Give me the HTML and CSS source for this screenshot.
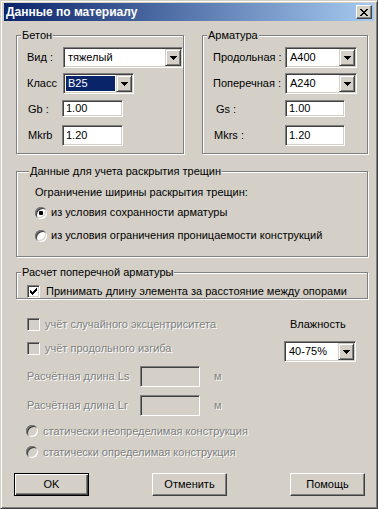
FILE: index.html
```html
<!DOCTYPE html>
<html lang="ru">
<head>
<meta charset="utf-8">
<title>Данные по материалу</title>
<link rel="stylesheet" href="styles.css">
</head>
<body>
<div class="window">
  <div class="titlebar">
    <span class="title">Данные по материалу</span>
    <span class="close"><svg width="8" height="7" viewBox="0 0 8 7"><path d="M0 0h2v1h-2zM6 0h2v1h-2zM1 1h2v1h-2zM5 1h2v1h-2zM2 2h4v1h-4zM3 3h2v1h-2zM2 4h4v1h-4zM1 5h2v1h-2zM5 5h2v1h-2zM0 6h2v1h-2zM6 6h2v1h-2z" fill="#000"/></svg></span>
  </div>
  <div class="content">
    <div class="top-row">
      <fieldset class="group beton">
        <legend>Бетон</legend>
        <div class="rows">
          <div class="row"><span class="lbl lbl-b">Вид :</span><div class="combo w120"><span class="val">тяжелый</span><span class="dd"><svg width="7" height="4" viewBox="0 0 7 4"><path d="M0 0h7v1h-1v1h-1v1h-1v1h-1v-1h-1v-1h-1v-1h-1z" fill="#000"/></svg></span></div></div>
          <div class="row"><span class="lbl lbl-b">Класс</span><div class="combo w71"><span class="val sel">В25</span><span class="dd"><svg width="7" height="4" viewBox="0 0 7 4"><path d="M0 0h7v1h-1v1h-1v1h-1v1h-1v-1h-1v-1h-1v-1h-1z" fill="#000"/></svg></span></div></div>
          <div class="row"><span class="lbl lbl-b p1">Gb :</span><div class="field short w61 ml-1">1.00</div></div>
          <div class="row"><span class="lbl lbl-b p1">Mkrb</span><div class="field w61 ml-1">1.20</div></div>
        </div>
      </fieldset>
      <fieldset class="group armatura">
        <legend>Арматура</legend>
        <div class="rows">
          <div class="row"><span class="lbl lbl-a">Продольная :</span><div class="combo w72"><span class="val">А400</span><span class="dd"><svg width="7" height="4" viewBox="0 0 7 4"><path d="M0 0h7v1h-1v1h-1v1h-1v1h-1v-1h-1v-1h-1v-1h-1z" fill="#000"/></svg></span></div></div>
          <div class="row"><span class="lbl lbl-a">Поперечная :</span><div class="combo w72"><span class="val">А240</span><span class="dd"><svg width="7" height="4" viewBox="0 0 7 4"><path d="M0 0h7v1h-1v1h-1v1h-1v1h-1v-1h-1v-1h-1v-1h-1z" fill="#000"/></svg></span></div></div>
          <div class="row"><span class="lbl lbl-a p3">Gs :</span><div class="field short w60">1.00</div></div>
          <div class="row"><span class="lbl lbl-a p1">Mkrs :</span><div class="field w60">1.20</div></div>
        </div>
      </fieldset>
    </div>

    <fieldset class="group cracks">
      <legend>Данные для учета раскрытия трещин</legend>
      <div class="note">Ограничение ширины раскрытия трещин:</div>
      <div class="rad-row first"><span class="radio checked"></span><span>из условия сохранности арматуры</span></div>
      <div class="rad-row second"><span class="radio"></span><span>из условия ограничения проницаемости конструкций</span></div>
    </fieldset>

    <fieldset class="group shear">
      <legend>Расчет поперечной арматуры</legend>
      <div class="crow wide"><span class="chk"><svg width="7" height="7" viewBox="0 0 7 7"><path d="M0 2h1v3h-1zM1 3h1v3h-1zM2 4h1v3h-1zM3 3h1v3h-1zM4 2h1v3h-1zM5 1h1v3h-1zM6 0h1v3h-1z" fill="#000"/></svg></span><span>Принимать длину элемента за расстояние между опорами</span></div>
    </fieldset>

    <div class="lower">
      <div class="lower-left disabled">
        <div class="crow c1"><span class="chk off"></span><span>учёт случайного эксцентриситета</span></div>
        <div class="crow c2"><span class="chk off"></span><span>учёт продольного изгиба</span></div>
        <div class="len-row r1"><span class="len-lbl">Расчётная длина Ls</span><div class="field off w60"></div><span class="unit">м</span></div>
        <div class="len-row r2"><span class="len-lbl">Расчётная длина Lr</span><div class="field off w60"></div><span class="unit">м</span></div>
        <div class="rad-row small s1"><span class="radio off"></span><span>статически неопределимая конструкция</span></div>
        <div class="rad-row small s2"><span class="radio off"></span><span>статически определимая конструкция</span></div>
      </div>
      <div class="lower-right">
        <div class="hum-lbl">Влажность</div>
        <div class="combo w72 hum"><span class="val">40-75%</span><span class="dd"><svg width="7" height="4" viewBox="0 0 7 4"><path d="M0 0h7v1h-1v1h-1v1h-1v1h-1v-1h-1v-1h-1v-1h-1z" fill="#000"/></svg></span></div>
      </div>
    </div>

    <div class="buttons">
      <div class="btn default">OK</div>
      <div class="btn">Отменить</div>
      <div class="btn">Помощь</div>
    </div>
  </div>
</div>
</body>
</html>
```

FILE: styles.css
```css
* { box-sizing: border-box; }
html, body { margin: 0; padding: 0; }
body {
  background: #d4d0c8;
  font-family: "Liberation Sans", Arial, sans-serif;
  font-size: 11px;
  line-height: 13px;
  color: #000;
}
.window {
  width: 378px;
  height: 509px;
  background: #d4d0c8;
  border: 1px solid;
  border-color: #d4d0c8 #404040 #404040 #d4d0c8;
  box-shadow: inset 1px 1px 0 #fff, inset -1px -1px 0 #808080;
  padding: 2px 3px 2px 3px;
}
.titlebar {
  height: 18px;
  background: linear-gradient(to right, #0a246a, #a6caf0);
  display: flex;
  align-items: center;
  justify-content: space-between;
  padding-left: 2px;
}
.title {
  color: #fff;
  font-weight: bold;
  font-size: 12px;
  line-height: 14px;
}
.close {
  width: 16px;
  height: 14px;
  margin-right: 2px;
  display: flex;
  align-items: center;
  justify-content: center;
  background: #d4d0c8;
  border: 1px solid;
  border-color: #fff #404040 #404040 #fff;
  box-shadow: inset -1px -1px 0 #808080;
}
.content {
  padding: 0 6px 0 12px;
}
.top-row {
  display: flex;
  gap: 18px;
  margin-top: 8px;
}
.group {
  margin: 0;
  min-width: 0;
  border: 1px solid #808080;
  box-shadow: inset 1px 1px 0 #fff, 1px 1px 0 #fff;
  padding: 5px 0 7px 10px;
}
.group legend {
  padding: 0 1px;
  margin-left: -6px;
  background: #d4d0c8;
  line-height: 13px;
}
.beton { width: 168px; }
.armatura { width: 166px; }
.rows {
  display: flex;
  flex-direction: column;
  gap: 5px;
}
.row {
  display: flex;
  align-items: center;
  height: 21px;
}
.lbl { flex: none; }
.lbl-b { width: 36px; }
.lbl-a { width: 72px; }
.p1 { padding-left: 1px; }
.p3 { padding-left: 3px; }
.ml-1 { margin-left: -1px; }

.combo {
  display: flex;
  height: 21px;
  background: #fff;
  border: 1px solid;
  border-color: #808080 #fff #fff #808080;
  box-shadow: inset 1px 1px 0 #404040, inset -1px -1px 0 #d4d0c8;
  padding: 1px;
}
.combo .val {
  flex: 1;
  padding-left: 3px;
  line-height: 17px;
  white-space: nowrap;
  overflow: hidden;
}
.combo .val.sel {
  background: #0a246a;
  color: #fff;
  margin: 1px;
  padding-left: 2px;
  line-height: 15px;
}
.dd {
  flex: none;
  width: 16px;
  height: 17px;
  display: flex;
  align-items: center;
  justify-content: center;
  background: #d4d0c8;
  border: 1px solid;
  border-color: #d4d0c8 #404040 #404040 #d4d0c8;
  box-shadow: inset 1px 1px 0 #fff, inset -1px -1px 0 #808080;
}
.w120 { width: 120px; }
.w71 { width: 71px; }
.w72 { width: 72px; }
.w61 { width: 61px; }
.w60 { width: 60px; }

.field {
  flex: none;
  height: 21px;
  background: #fff;
  border: 1px solid;
  border-color: #808080 #fff #fff #808080;
  box-shadow: inset 1px 1px 0 #404040, inset -1px -1px 0 #d4d0c8;
  padding: 0 3px;
  line-height: 18px;
}
.field.short {
  height: 17px;
  line-height: 15px;
  align-self: flex-start;
  margin-top: 1px;
}
.field.off { background: #d4d0c8; }

.cracks {
  margin-top: 11px;
  padding: 8px 0 12px 18px;
}
.note { height: 13px; }
.rad-row {
  display: flex;
  align-items: center;
  gap: 4px;
  height: 17px;
}
.rad-row.first { margin-top: 5px; }
.rad-row.second { margin-top: 6px; }
.radio {
  flex: none;
  width: 12px;
  height: 12px;
  border-radius: 50%;
  background: #fff;
  box-shadow: inset 1px 1px 0 #808080, inset -1px -1px 0 #fff, inset 2px 2px 0 #404040, inset -2px -2px 0 #d4d0c8;
  display: flex;
  align-items: center;
  justify-content: center;
}
.radio.checked::after {
  content: "";
  width: 4px;
  height: 4px;
  border-radius: 1px;
  background: #000;
}
.radio.off { background: #d4d0c8; }

.shear {
  margin-top: 9px;
  padding: 6px 0 0 10px;
}
.crow {
  display: flex;
  align-items: center;
  gap: 5px;
  height: 13px;
}
.crow.wide { gap: 6px; }
.chk {
  flex: none;
  width: 13px;
  height: 13px;
  background: #fff;
  border: 1px solid;
  border-color: #808080 #fff #fff #808080;
  box-shadow: inset 1px 1px 0 #404040, inset -1px -1px 0 #d4d0c8;
  display: flex;
  align-items: center;
  justify-content: center;
}
.chk.off { background: #d4d0c8; }

.lower {
  display: flex;
  margin-left: 11px;
}
.lower-left {
  width: 257px;
  display: flex;
  flex-direction: column;
}
.disabled {
  color: #808080;
  text-shadow: 1px 1px 0 #fff;
}
.c1 { margin-top: 19px; }
.c2 { margin-top: 11px; }
.len-row {
  display: flex;
  align-items: center;
  height: 21px;
}
.r1 { margin-top: 11px; }
.r2 { margin-top: 8px; }
.len-lbl { width: 113px; flex: none; }
.unit { margin-left: 14px; }
.rad-row.small {
  height: 12px;
  gap: 5px;
  margin-left: -1px;
}
.s1 { margin-top: 9px; }
.s2 { margin-top: 9px; }
.lower-right {
  display: flex;
  flex-direction: column;
}
.hum-lbl {
  margin-top: 19px;
  padding-left: 6px;
  height: 13px;
}
.hum { margin-top: 10px; }

.buttons {
  display: flex;
  gap: 63px;
  margin-top: 15px;
  margin-left: -2px;
}
.btn {
  width: 75px;
  height: 23px;
  display: flex;
  align-items: center;
  justify-content: center;
  border: 1px solid;
  border-color: #fff #404040 #404040 #fff;
  box-shadow: inset -1px -1px 0 #808080, inset 1px 1px 0 #d4d0c8;
}
.btn.default {
  border-color: #000;
  box-shadow: inset 1px 1px 0 #fff, inset -1px -1px 0 #404040, inset -2px -2px 0 #808080;
}
```
